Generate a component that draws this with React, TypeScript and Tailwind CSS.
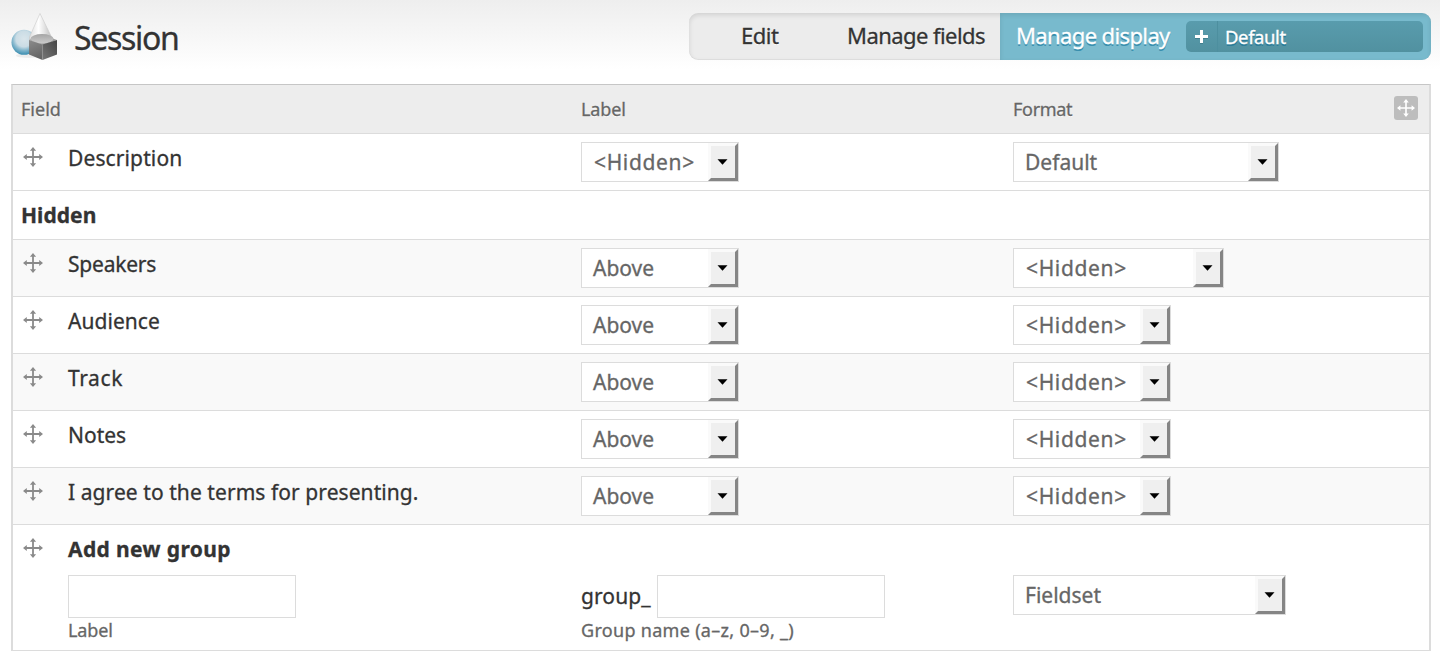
import React from "react";

type Row = {
  name: string;
  nameClass: string;
  label: string;
  labelClass: string;
  format: string;
  formatClass: string;
  formatWidth: string;
  striped: boolean;
};

const hiddenText = "pl-[12px] tracking-[0.65px]";

const hiddenRows: Row[] = [
  { name: "Speakers", nameClass: "tracking-[-0.22px]", label: "Above", labelClass: "pl-[11px]", format: "<Hidden>", formatClass: hiddenText, formatWidth: "w-[211px]", striped: true },
  { name: "Audience", nameClass: "tracking-[0.05px]", label: "Above", labelClass: "pl-[11px]", format: "<Hidden>", formatClass: hiddenText, formatWidth: "w-[158px]", striped: false },
  { name: "Track", nameClass: "tracking-[0.6px]", label: "Above", labelClass: "pl-[11px]", format: "<Hidden>", formatClass: hiddenText, formatWidth: "w-[158px]", striped: true },
  { name: "Notes", nameClass: "", label: "Above", labelClass: "pl-[11px]", format: "<Hidden>", formatClass: hiddenText, formatWidth: "w-[158px]", striped: false },
  { name: "I agree to the terms for presenting.", nameClass: "tracking-[0.07px]", label: "Above", labelClass: "pl-[11px]", format: "<Hidden>", formatClass: hiddenText, formatWidth: "w-[158px]", striped: true },
];

const description: Row = {
  name: "Description", nameClass: "tracking-[0.12px]", label: "<Hidden>", labelClass: hiddenText,
  format: "Default", formatClass: "pl-[11px]", formatWidth: "w-[266px]", striped: false,
};

function MoveIcon({ className }: { className: string }) {
  return (
    <svg viewBox="0 0 20 20" className={className} fill="none" stroke="currentColor">
      <path d="M10 2v16M2 10h16" strokeWidth="1.8" />
      <path d="M10 0l3.100 3.800H6.900zM10 20l3.100-3.800H6.900zM0 10l3.800-3.100v6.200zM20 10l-3.800-3.100v6.200z" fill="currentColor" stroke="none" />
    </svg>
  );
}

function ShapesIcon() {
  return (
    <svg viewBox="0 0 48 50" className="h-[50px] w-[48px]">
      <defs>
        <radialGradient id="ball" cx="0.5" cy="0.36" r="0.64">
          <stop offset="0" stopColor="#d9e5eb" />
          <stop offset="0.5" stopColor="#cadce5" />
          <stop offset="0.68" stopColor="#8fbdd1" />
          <stop offset="1" stopColor="#3a8db0" />
        </radialGradient>
        <linearGradient id="cone" x1="0" x2="1">
          <stop offset="0" stopColor="#dedede" />
          <stop offset="0.38" stopColor="#ffffff" />
          <stop offset="0.65" stopColor="#e2e2e2" />
          <stop offset="1" stopColor="#b5b5b5" />
        </linearGradient>
        <linearGradient id="lid" x1="0" y1="0" x2="0" y2="1">
          <stop offset="0" stopColor="#a5a5a5" />
          <stop offset="1" stopColor="#cccccc" />
        </linearGradient>
        <linearGradient id="boxLeft" x1="0" y1="0" x2="0.3" y2="1">
          <stop offset="0" stopColor="#8c8c8c" />
          <stop offset="1" stopColor="#656565" />
        </linearGradient>
        <linearGradient id="boxRight" x1="1" y1="0" x2="0" y2="1">
          <stop offset="0" stopColor="#454545" />
          <stop offset="1" stopColor="#777777" />
        </linearGradient>
      </defs>
      <ellipse cx="18" cy="43.500" rx="13" ry="2.500" fill="#000" opacity="0.06" />
      <circle cx="13" cy="30.300" r="12.500" fill="url(#ball)" />
      <path d="M29 1.500L18.500 25v5l11 4 12.500-6z" fill="url(#cone)" stroke="#c9c9c9" strokeWidth="0.6" />
      <path d="M18 28l13-5.500L46 28l-14 5z" fill="#9d9d9d" />
      <ellipse cx="31" cy="26.800" rx="11.500" ry="4.800" fill="url(#lid)" />
      <path d="M18 28l13.500 4.500V48L18 42.500z" fill="url(#boxLeft)" />
      <path d="M31.500 32.500L46 28v14.500L31.500 48z" fill="url(#boxRight)" />
    </svg>
  );
}

function Select({ text, textClass, width }: { text: string; textClass: string; width: string }) {
  return (
    <div className={`${width} flex h-[40px] border border-[#dcdcdc] bg-white text-[21px] text-[#666]`}>
      <span className={`${textClass} flex-1 whitespace-nowrap leading-[38px]`}>{text}</span>
      <span className="flex h-[38px] w-[30px] items-center justify-center border-[3px] border-t-[#fafafa] border-r-[#858585] border-b-[#858585] border-l-[#fafafa] bg-[#efefef] pr-px">
        <svg viewBox="0 0 11 6" className="h-[6px] w-[11px]">
          <path d="M0.500 0.200h10L5.500 5.800z" fill="#000" />
        </svg>
      </span>
    </div>
  );
}

const columns = "grid grid-cols-[568px_432px_416px]";

function FieldRow({ row }: { row: Row }) {
  return (
    <div className={`${columns} h-[57px] border-b border-[#dcdcdc] ${row.striped ? "bg-[#f9f9f9]" : "bg-white"}`}>
      <div className="flex">
        <MoveIcon className="mt-[13px] ml-[10px] h-[20px] w-[20px] text-[#8a8a8a]" />
        <span className="pt-[9px] pl-[25px] leading-[30px]"><span className={row.nameClass}>{row.name}</span></span>
      </div>
      <div className="pt-[8px]"><Select text={row.label} textClass={row.labelClass} width="w-[158px]" /></div>
      <div className="pt-[8px]"><Select text={row.format} textClass={row.formatClass} width={row.formatWidth} /></div>
    </div>
  );
}

export default function App() {
  return (
    <div className="h-[660px] overflow-hidden bg-white bg-[linear-gradient(#eeeeee,#ffffff_70px)] font-['Noto_Sans','Open_Sans',sans-serif] text-[21px] text-[#333] [-webkit-text-stroke:0.3px_currentColor]">
      <header className="flex h-[84px] items-start pr-[9px] pl-[11px]">
        <div className="pt-[12px]"><ShapesIcon /></div>
        <h1 className="pt-[13px] pl-[15px] text-[32px] leading-[49px] tracking-[-1.3px]">Session</h1>
        <nav className="mt-[13px] ml-auto flex h-[47px] w-[742px] overflow-hidden rounded-[9px] bg-[#ececec] text-[22px] leading-[45px] whitespace-nowrap shadow-[inset_0_2px_5px_rgba(0,0,0,0.12),inset_0_-1px_0_rgba(0,0,0,0.04)] [text-shadow:0_1px_0_#fff]">
          <a className="w-[157px] pl-[52px] tracking-[-0.5px]">Edit</a>
          <a className="w-[154px] pl-px tracking-[-0.56px]">Manage fields</a>
          <div className="flex flex-1 bg-[#78bacd] text-white shadow-[inset_0_2px_5px_rgba(0,0,0,0.1)] [text-shadow:0_2px_0_#3a8fae]">
            <a className="w-[186px] pl-[16px] tracking-[-0.62px]">Manage display</a>
            <div className="mt-[8px] flex h-[31px] w-[237px] rounded-[5px] bg-[linear-gradient(#599cad,#5191a0)] text-[18.5px] leading-[31px] [text-shadow:0_2px_0_#2b7c99]">
              <span className="flex w-[32px] items-center justify-center border-r border-[#4d8f9f]">
                <svg viewBox="0 0 13 14" className="h-[14px] w-[13px]">
                  <path d="M6.500 1v13M0 7.500h13" stroke="#427f8e" strokeWidth="3" />
                  <path d="M6.500 0v13M0 6.500h13" stroke="#fff" strokeWidth="3" />
                </svg>
              </span>
              <span className="pl-[7px] tracking-[-0.4px]">Default</span>
            </div>
          </div>
        </nav>
      </header>

      <main className="mr-[9px] ml-[11px] h-[567px] border-x-2 border-t border-[#dcdcdc] border-t-[#c6c6c6] bg-white">
        <div className={`${columns} h-[49px] border-b border-[#dcdcdc] bg-[#ededed] text-[18px] leading-[48px] text-[#666] [text-shadow:0_1px_0_#fff]`}>
          <span className="pl-[8px]">Field</span>
          <span className="tracking-[-0.15px]">Label</span>
          <span className="flex justify-between pr-[11px]">
            <span className="tracking-[-0.3px]">Format</span>
            <span className="mt-[11px] flex h-[24px] w-[24px] items-center justify-center rounded-[3px] bg-[#bdbdbd] text-white">
              <MoveIcon className="h-[18px] w-[18px]" />
            </span>
          </span>
        </div>
        <FieldRow row={description} />
        <div className="h-[49px] border-b border-[#dcdcdc] pl-[8px] leading-[49px] font-bold tracking-[0.05px]">Hidden</div>
        {hiddenRows.map((row) => <FieldRow key={row.name} row={row} />)}
        <div className={`${columns} h-[126px] border-b border-[#dcdcdc]`}>
          <div className="flex">
            <MoveIcon className="mt-[13px] ml-[10px] h-[20px] w-[20px] text-[#8a8a8a]" />
            <div className="pl-[25px]">
              <div className="h-[50px] pt-[9px] leading-[30px] font-bold tracking-[0.38px]">Add new group</div>
              <input aria-label="Label" className="block h-[43px] w-[228px] border border-[#dcdcdc] bg-white outline-none" />
              <div className="text-[18px] leading-[25px] tracking-[-0.15px] text-[#666]">Label</div>
            </div>
          </div>
          <div className="pt-[50px]">
            <div className="flex">
              <span className="w-[76px] leading-[42px] tracking-[0.1px]">group_</span>
              <input aria-label="Group name" className="h-[43px] w-[228px] border border-[#dcdcdc] bg-white outline-none" />
            </div>
            <div className="text-[18px] leading-[25px] tracking-[0.3px] text-[#666]">Group name (a–z, 0–9, _)</div>
          </div>
          <div className="pt-[50px]"><Select text="Fieldset" textClass="pl-[11px]" width="w-[273px]" /></div>
        </div>
      </main>
    </div>
  );
}
